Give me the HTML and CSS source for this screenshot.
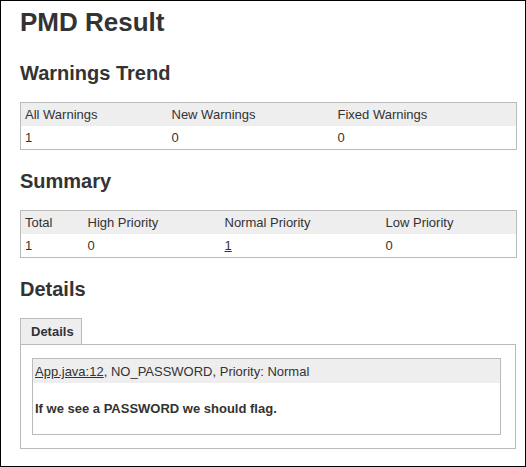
FILE: index.html
```html
<!DOCTYPE html>
<html>
<head>
<meta charset="utf-8">
<link rel="stylesheet" href="styles.css">
</head>
<body>
<div class="frame">
  <h1 class="title">PMD Result</h1>

  <h2 class="section">Warnings Trend</h2>
  <table class="grid">
    <colgroup><col class="t1c1"><col class="t1c2"><col class="t1c3"></colgroup>
    <thead><tr><th>All Warnings</th><th>New Warnings</th><th>Fixed Warnings</th></tr></thead>
    <tbody><tr><td>1</td><td>0</td><td>0</td></tr></tbody>
  </table>

  <h2 class="section">Summary</h2>
  <table class="grid">
    <colgroup><col class="t2c1"><col class="t2c2"><col class="t2c3"><col class="t2c4"></colgroup>
    <thead><tr><th>Total</th><th>High Priority</th><th>Normal Priority</th><th>Low Priority</th></tr></thead>
    <tbody><tr><td>1</td><td>0</td><td><a class="link" href="#">1</a></td><td>0</td></tr></tbody>
  </table>

  <h2 class="section">Details</h2>
  <div class="tabs">
    <div class="tab">Details</div>
  </div>
  <div class="panel">
    <div class="item">
      <div class="item-head"><a class="link" href="#">App.java:12</a>, NO_PASSWORD, Priority: Normal</div>
      <div class="item-body">If we see a PASSWORD we should flag.</div>
    </div>
  </div>
</div>
</body>
</html>
```
FILE: styles.css
```css
html, body {
  margin: 0;
  padding: 0;
  background: #fff;
}
.frame {
  box-sizing: border-box;
  width: 526px;
  height: 467px;
  border: 1px solid #000;
  padding: 0 10px 0 19px;
  font-family: "Liberation Sans", Arial, sans-serif;
  color: #333;
  overflow: hidden;
}
.title {
  margin: 6px 0 0 0;
  font-size: 26px;
  line-height: 30px;
  font-weight: bold;
  color: #333;
}
.section {
  margin: 24px 0 17px 0;
  font-size: 20px;
  line-height: 24px;
  font-weight: bold;
  color: #333;
}
.grid + .section { margin-top: 19px; }
.grid {
  width: 496px;
  border-collapse: collapse;
  table-layout: fixed;
  border: 1px solid #bbb;
  font-size: 13px;
}
.grid th {
  background: #eee;
  font-weight: normal;
  text-align: left;
  padding: 0 4px;
  height: 23px;
}
.grid td {
  padding: 0 4px;
  height: 23px;
}
.t1c1 { width: 147px; }
.t1c2 { width: 166px; }
.t1c3 { width: 183px; }
.t2c1 { width: 63px; }
.t2c2 { width: 137px; }
.t2c3 { width: 161px; }
.t2c4 { width: 135px; }
.link {
  color: #333;
  text-decoration: underline;
}
.tabs {
  display: flex;
}
.tab {
  width: 62px;
  height: 26px;
  box-sizing: border-box;
  border: 1px solid #bbb;
  border-bottom: none;
  background: #eee;
  font-size: 13px;
  font-weight: bold;
  line-height: 25px;
  padding-left: 10px;
}
.panel {
  width: 496px;
  box-sizing: border-box;
  border: 1px solid #bbb;
  padding: 13px 14px 13px 11px;
}
.item {
  border: 1px solid #bbb;
  font-size: 13px;
}
.item-head {
  background: #eee;
  height: 24px;
  line-height: 25px;
  padding-left: 2px;
}
.item-body {
  font-weight: bold;
  padding: 18px 2px 0 2px;
  height: 51px;
  box-sizing: border-box;
}
```
